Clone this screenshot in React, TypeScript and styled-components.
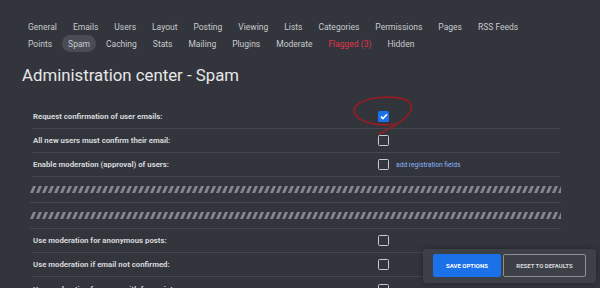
import React from "react";
import styled, { createGlobalStyle } from "styled-components";

const Global = createGlobalStyle`
  html, body { margin: 0; padding: 0; background: #32353c; }
  body { font-family: Roboto, "Liberation Sans", sans-serif; color: #d2d3d6; overflow: hidden; }
`;

const Page = styled.div`
  position: relative;
  width: 600px;
  height: 288px;
  padding: 18px 0 0 22px;
  box-sizing: border-box;
`;

const Nav = styled.nav`
  display: flex;
  flex-direction: column;
`;

const NavRow = styled.div`
  display: flex;
  gap: 4px;
  height: 17px;
`;

const NavItem = styled.a<{ $active?: boolean; $alert?: boolean }>`
  display: flex;
  align-items: center;
  padding: 0 6px;
  height: 17px;
  border-radius: 9px;
  font-size: 8.5px;
  color: ${(p) => (p.$alert ? "#e0344a" : "#c9cacd")};
  background: ${(p) => (p.$active ? "#4a4d55" : "transparent")};
  text-decoration: none;
  white-space: nowrap;
`;

const Title = styled.h1`
  margin: 13px 0 0 0;
  font-size: 16.8px;
  line-height: 20px;
  font-weight: 400;
  color: #e6e7e9;
`;

const Table = styled.div`
  margin: 20px 0 0 10px;
  width: 528px;
  display: flex;
  flex-direction: column;
`;

const Row = styled.div<{ $last?: boolean }>`
  display: grid;
  grid-template-columns: 346px auto;
  align-items: center;
  height: 24px;
  box-sizing: border-box;
  border-bottom: ${(p) => (p.$last ? "none" : "1px solid #44474e")};
`;

const Label = styled.div`
  padding-left: 1px;
  font-size: 7.8px;
  font-weight: 700;
  color: #d6d7da;
  white-space: nowrap;
`;

const Field = styled.div`
  display: flex;
  align-items: center;
  gap: 7px;
`;

const Box = styled.span<{ $checked?: boolean }>`
  width: 11px;
  height: 11px;
  box-sizing: border-box;
  border-radius: 1.5px;
  border: ${(p) => (p.$checked ? "none" : "1.5px solid #c9cacd")};
  background: ${(p) => (p.$checked ? "#1b72e8" : "transparent")};
  display: flex;
  align-items: center;
  justify-content: center;
`;

const Link = styled.a`
  font-size: 6.7px;
  color: #8ab4f8;
  text-decoration: none;
`;

const StripeRow = styled.div`
  height: 26px;
  display: flex;
  align-items: center;
  box-sizing: border-box;
  border-bottom: 1px solid #44474e;
  margin: 0 -1px 0 -2px;
`;

const StripeSvg = styled.svg`
  display: block;
  width: 100%;
  height: 7px;
`;

const Stripe = ({ id }: { id: string }) => (
  <StripeSvg>
    <defs>
      <pattern id={id} width="6" height="7" patternUnits="userSpaceOnUse">
        <polygon points="0,7 3,7 6,0 3,0" fill="#85878e" />
      </pattern>
    </defs>
    <rect width="100%" height="7" fill={`url(#${id})`} />
  </StripeSvg>
);

const Panel = styled.div`
  position: absolute;
  right: 4px;
  bottom: 5px;
  display: flex;
  gap: 2px;
  padding: 5px 10px 6px 10px;
  background: #3d4047;
  border-radius: 3px;
  box-shadow: 0 0 6px rgba(0, 0, 0, 0.35);
`;

const Button = styled.button<{ $primary?: boolean }>`
  height: 23px;
  padding: 0;
  width: ${(p) => (p.$primary ? "68px" : "83px")};
  border-radius: 2px;
  border: ${(p) => (p.$primary ? "none" : "1px solid #8d8f95")};
  background: ${(p) => (p.$primary ? "#1b72e8" : "transparent")};
  color: ${(p) => (p.$primary ? "#ffffff" : "#d6d7da")};
  font-family: Roboto, "Liberation Sans", sans-serif;
  font-size: 6px;
  font-weight: 700;
`;

const Annotation = styled.svg`
  position: absolute;
  left: 0;
  top: 0;
  pointer-events: none;
`;

const Check = () => (
  <svg width="8" height="7" viewBox="0 0 8 7">
    <path d="M1 3.6 L3 5.5 L7 1.2" fill="none" stroke="#fff" strokeWidth="1.6" />
  </svg>
);

const row1 = ["General", "Emails", "Users", "Layout", "Posting", "Viewing", "Lists", "Categories", "Permissions", "Pages", "RSS Feeds"];

export default function App() {
  return (
    <>
      <Global />
      <Page>
        <Nav>
          <NavRow>
            {row1.map((t) => (
              <NavItem key={t}>{t}</NavItem>
            ))}
          </NavRow>
          <NavRow>
            <NavItem>Points</NavItem>
            <NavItem $active>Spam</NavItem>
            <NavItem>Caching</NavItem>
            <NavItem>Stats</NavItem>
            <NavItem>Mailing</NavItem>
            <NavItem>Plugins</NavItem>
            <NavItem>Moderate</NavItem>
            <NavItem $alert>Flagged (3)</NavItem>
            <NavItem>Hidden</NavItem>
          </NavRow>
        </Nav>
        <Title>Administration center - Spam</Title>
        <Table>
          <Row>
            <Label>Request confirmation of user emails:</Label>
            <Field>
              <Box $checked>
                <Check />
              </Box>
            </Field>
          </Row>
          <Row>
            <Label>All new users must confirm their email:</Label>
            <Field>
              <Box />
            </Field>
          </Row>
          <Row>
            <Label>Enable moderation (approval) of users:</Label>
            <Field>
              <Box />
              <Link>add registration fields</Link>
            </Field>
          </Row>
          <StripeRow>
            <Stripe id="stripeA" />
          </StripeRow>
          <StripeRow>
            <Stripe id="stripeB" />
          </StripeRow>
          <Row>
            <Label>Use moderation for anonymous posts:</Label>
            <Field>
              <Box />
            </Field>
          </Row>
          <Row>
            <Label>Use moderation if email not confirmed:</Label>
            <Field>
              <Box />
            </Field>
          </Row>
          <Row $last>
            <Label>Use moderation for users with few points:</Label>
            <Field>
              <Box />
            </Field>
          </Row>
        </Table>
        <Annotation width="600" height="288" viewBox="0 0 600 288">
          <path
            d="M379 134 C 388 129, 410 119, 411.5 108 C 413 99, 398 96, 380 97.5 C 362 99, 352 106, 354.5 113 C 357 121, 375 127, 397 124"
            fill="none"
            stroke="#971c22"
            strokeWidth="1.7"
            strokeLinecap="round"
          />
        </Annotation>
        <Panel>
          <Button $primary>SAVE OPTIONS</Button>
          <Button>RESET TO DEFAULTS</Button>
        </Panel>
      </Page>
    </>
  );
}
